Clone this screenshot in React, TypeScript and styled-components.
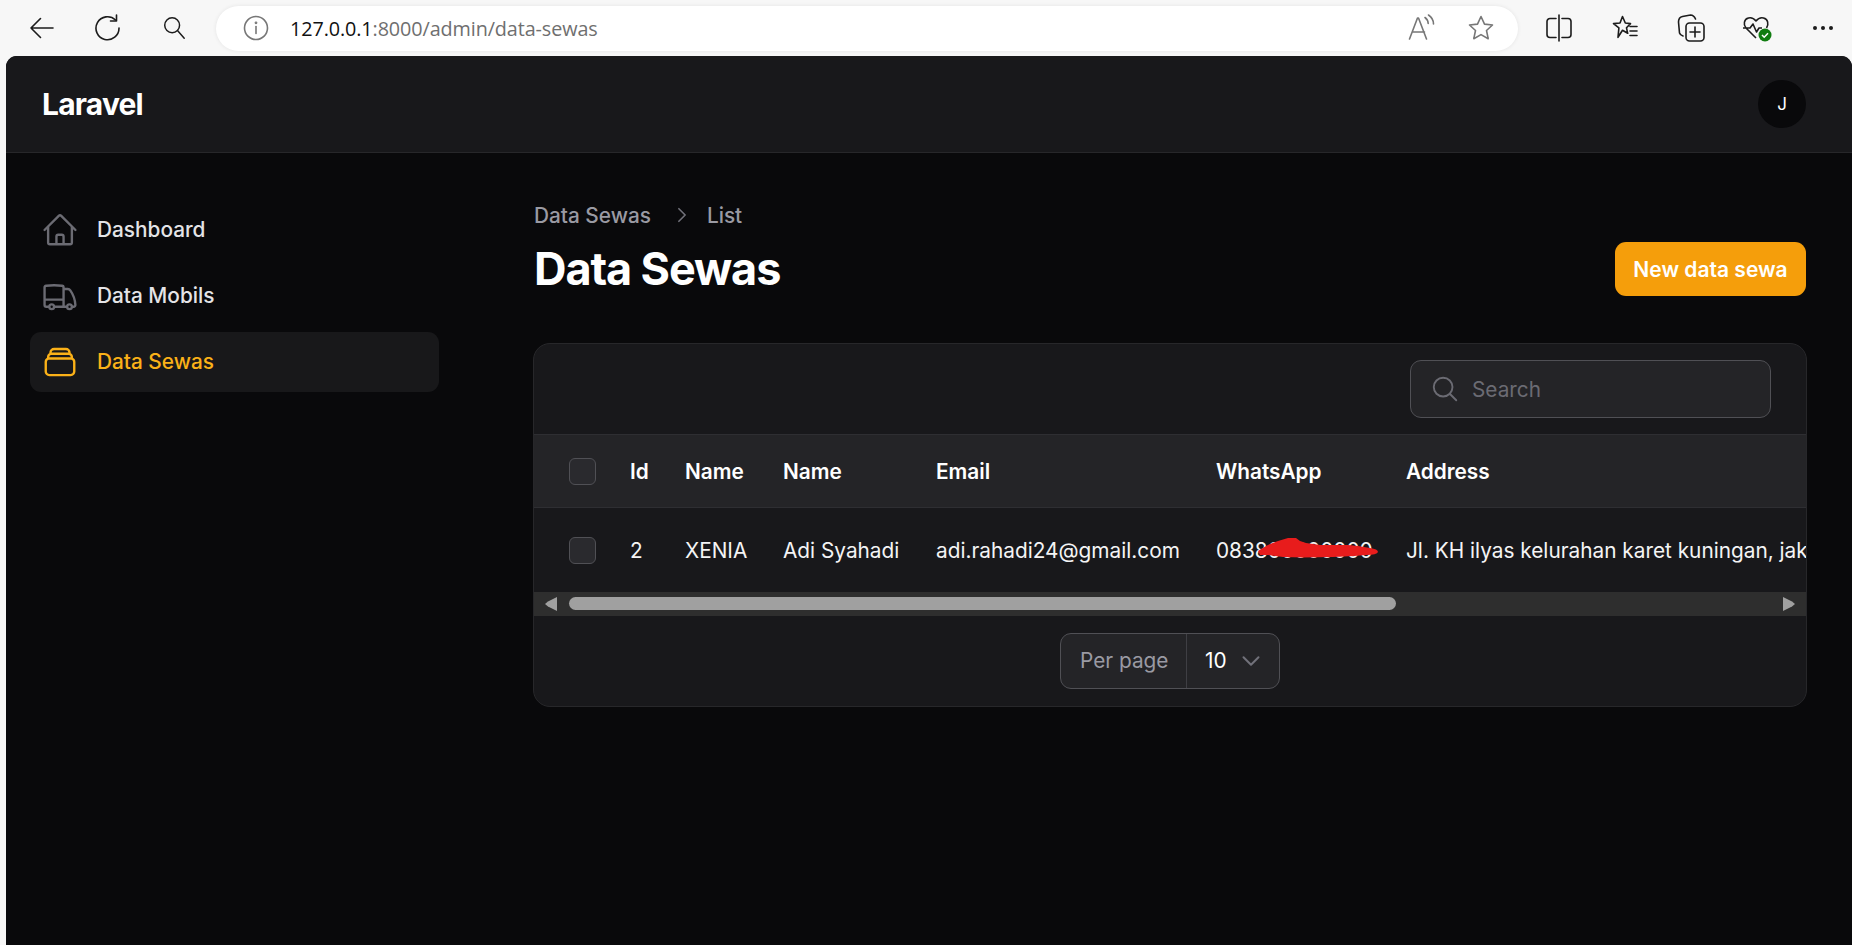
import React from "react"
import styled, { createGlobalStyle } from "styled-components"
import {
    HiOutlineChevronDown,
    HiOutlineChevronRight,
    HiOutlineHome,
    HiOutlineMagnifyingGlass,
    HiOutlineRectangleStack,
    HiOutlineTruck,
} from "react-icons/hi2"

const GlobalStyle = createGlobalStyle`
    html, body {
        margin: 0;
        height: 100%;
        background: #f7f7f7;
        overflow: hidden;
    }

    * {
        box-sizing: border-box;
    }
`

const Page = styled.div`
    width: 1852px;
    height: 945px;
    display: flex;
    flex-direction: column;
    overflow: hidden;
    font-family: Inter, "Liberation Sans", sans-serif;
`

/* browser chrome */
const BrowserBar = styled.div`
    flex: 0 0 56px;
    display: flex;
    align-items: center;
    padding: 0 0 0 9px;
    background: #f7f7f7;
    color: #1c1c1c;
`

const BarButton = styled.span`
    flex: 0 0 66px;
    display: flex;
    align-items: center;
    justify-content: center;
`

const AddressBar = styled.div`
    flex: 0 0 1302px;
    height: 45px;
    margin: 0 8px 0 9px;
    padding: 0 23px 0 26px;
    display: flex;
    align-items: center;
    background: #fff;
    border-radius: 23px;
    box-shadow: 0 0 4px rgba(0, 0, 0, 0.08);
`

const Url = styled.div`
    margin-left: 20px;
    flex: 1;
    font-family: "Open Sans", sans-serif;
    font-size: 19.8px;
    letter-spacing: -0.1px;
    color: #6f6f6f;

    b {
        font-weight: 400;
        color: #111;
    }
`

const AddressActions = styled.div`
    display: flex;
    align-items: center;
    gap: 31px;
    color: #777;
`

/* app shell */
const AppWindow = styled.div`
    flex: 1;
    margin-left: 6px;
    display: flex;
    flex-direction: column;
    background: #09090b;
    border-radius: 11px 11px 0 0;
    overflow: hidden;
`

const TopBar = styled.header`
    flex: 0 0 97px;
    display: flex;
    align-items: center;
    justify-content: space-between;
    padding: 0 46px 0 36px;
    background: #18181b;
    border-bottom: 1px solid #27272a;
`

const Logo = styled.div`
    font-size: 30px;
    font-weight: 700;
    letter-spacing: -0.8px;
    color: #fff;
`

const Avatar = styled.div`
    width: 48px;
    height: 48px;
    display: flex;
    align-items: center;
    justify-content: center;
    border-radius: 50%;
    background: #09090b;
    color: #fff;
    font-size: 17px;
`

const Body = styled.div`
    flex: 1;
    display: flex;
`

const Sidebar = styled.nav`
    flex: 0 0 527px;
    padding: 47px 94px 0 24px;
    display: flex;
    flex-direction: column;
    gap: 6px;
`

const NavItem = styled.a<{ $active?: boolean }>`
    height: 60px;
    display: flex;
    align-items: center;
    gap: 18px;
    padding-left: 11px;
    border-radius: 11px;
    font-size: 20.8px;
    font-weight: 500;
    color: ${(p) => (p.$active ? "#fbb118" : "#e4e4e7")};
    background: ${(p) => (p.$active ? "#18181a" : "transparent")};

    svg {
        width: 38px;
        height: 38px;
        color: ${(p) => (p.$active ? "#fbb118" : "#6b6b73")};
    }
`

const NavLabel = styled.span`
    margin-bottom: 2px;
`

const Main = styled.main`
    flex: 0 0 1274px;
    padding-top: 48px;
`

const Breadcrumb = styled.div`
    height: 28px;
    padding-left: 1px;
    display: flex;
    align-items: center;
    gap: 15px;
    font-size: 20.8px;
    font-weight: 500;
    color: #9a9aa3;

    svg {
        width: 20px;
        height: 20px;
        margin-left: 6px;
        color: #71717a;
        stroke-width: 2;
    }
`

const PageHead = styled.div`
    margin: 13px 0 47px;
    padding: 0 1px;
    height: 54px;
    display: flex;
    align-items: center;
    justify-content: space-between;
`

const Title = styled.h1`
    margin: 0;
    font-size: 45px;
    line-height: 52px;
    font-weight: 700;
    letter-spacing: -1.1px;
    color: #fff;
`

const PrimaryButton = styled.button`
    width: 191px;
    height: 54px;
    border: 0;
    border-radius: 11px;
    background: #f59e0b;
    color: #fff;
    font-family: inherit;
    font-size: 21px;
    font-weight: 600;
`

const Card = styled.section`
    height: 364px;
    background: #18181b;
    border: 1px solid #27272a;
    border-radius: 17px;
    overflow: hidden;
`

const Toolbar = styled.div`
    height: 90px;
    padding: 16px 35px 0 0;
    display: flex;
    justify-content: flex-end;
`

const SearchBox = styled.label`
    width: 361px;
    height: 58px;
    padding-left: 19px;
    display: flex;
    align-items: center;
    gap: 10px;
    background: #242427;
    border: 1.5px solid #505055;
    border-radius: 11px;

    svg {
        width: 30px;
        height: 30px;
        color: #6b6b73;
    }
`

const SearchInput = styled.input`
    flex: 1;
    min-width: 0;
    border: 0;
    outline: 0;
    background: transparent;
    font-family: inherit;
    font-size: 20.8px;
    color: #fff;

    &::placeholder {
        color: #6b6b73;
        opacity: 1;
    }
`

const Table = styled.table`
    width: 1272px;
    table-layout: fixed;
    border-collapse: collapse;
    font-size: 20.8px;
`

const HeadRow = styled.tr`
    height: 73px;
    background: #242427;
    border-top: 1px solid #2e2e32;
    border-bottom: 1px solid #2e2e32;
`

const HeadCell = styled.th`
    padding: 0;
    text-align: left;
    font-weight: 600;
    color: #fff;
`

const BodyRow = styled.tr`
    height: 84px;
`

const Cell = styled.td`
    position: relative;
    padding: 1px 0 0;
    white-space: nowrap;
    overflow: hidden;
    color: #f4f4f5;
`

const CheckCell = styled.div`
    padding-left: 35px;
    display: flex;
`

const Checkbox = styled.span`
    width: 27px;
    height: 27px;
    background: #2a2a2e;
    border: 1.5px solid #505055;
    border-radius: 6px;
`

const Scribble = styled.svg`
    position: absolute;
    left: 42px;
    top: 30px;
    width: 120px;
    height: 21px;
`

const ScrollTrack = styled.div`
    height: 24px;
    padding: 0 11px;
    display: flex;
    align-items: center;
    background: #2e2e2e;
    color: #a0a0a0;
`

const ScrollThumb = styled.div<{ $width: number }>`
    width: ${(p) => p.$width}px;
    height: 13px;
    margin: 0 auto 0 12px;
    border-radius: 7px;
    background: #a0a0a0;
`

const Pagination = styled.div`
    padding-top: 17px;
    display: flex;
    justify-content: center;
`

const PerPage = styled.div`
    width: 220px;
    height: 56px;
    display: flex;
    align-items: center;
    background: #242427;
    border: 1.5px solid #505055;
    border-radius: 11px;
    font-size: 20.8px;
`

const PerPageLabel = styled.span`
    flex: 0 0 126px;
    height: 100%;
    display: flex;
    align-items: center;
    padding-left: 19px;
    border-right: 1px solid #3f3f44;
    color: #9a9aa3;
`

const PerPageValue = styled.span`
    flex: 1;
    display: flex;
    align-items: center;
    padding-left: 18px;
    gap: 12px;
    color: #fff;

    svg {
        width: 24px;
        height: 24px;
        color: #71717a;
        stroke-width: 2;
    }
`

const Icon: React.FC<{ size?: number; children: React.ReactNode }> = ({
    size = 28,
    children,
}) => (
    <svg
        width={size}
        height={size}
        viewBox="0 0 28 28"
        fill="none"
        stroke="currentColor"
        strokeWidth="1.6"
        strokeLinecap="round"
        strokeLinejoin="round"
    >
        {children}
    </svg>
)

const columns = [96, 55, 98, 153, 280, 190, 400]

export default function App() {
    return (
        <Page>
            <GlobalStyle />
            <BrowserBar>
                <BarButton>
                    <Icon>
                        <path d="M25 14H3M12.5 4.5 3 14l9.5 9.5" />
                    </Icon>
                </BarButton>
                <BarButton>
                    <Icon>
                        <path d="M25 14A11.5 11.5 0 1 1 21.5 6" />
                        <path d="M22.500 1v6h-6" />
                    </Icon>
                </BarButton>
                <BarButton>
                    <Icon size={26}>
                        <circle cx="12" cy="11" r="8" />
                        <path d="m18 17 7 8" />
                    </Icon>
                </BarButton>
                <AddressBar>
                    <Icon>
                        <circle cx="14" cy="14" r="11.5" stroke="#777" />
                        <path d="M14 12.5v7" stroke="#777" />
                        <circle cx="14" cy="8.8" r=".6" stroke="#777" />
                    </Icon>
                    <Url>
                        <b>127.0.0.1</b>:8000/admin/data-sewas
                    </Url>
                    <AddressActions>
                        <Icon>
                            <path d="m1.5 25 8-21h1l8 21M4.5 18h12" />
                            <path d="M17 3.5c2 1.5 3 3.5 3.2 6M20.5 1c3 2 5 5 5 9" />
                        </Icon>
                        <Icon>
                            <path d="m14 2.5 3.5 7.6 8 .9-6 5.5 1.7 8.2L14 20.6l-7.2 4.1 1.7-8.2-6-5.5 8-.9z" />
                        </Icon>
                    </AddressActions>
                </AddressBar>
                <BarButton>
                    <Icon>
                        <path d="M11 4.500H5a3 3 0 0 0-3 3v13a3 3 0 0 0 3 3h6M17 4.500h6a3 3 0 0 1 3 3v13a3 3 0 0 1-3 3h-6M14 1v26" />
                    </Icon>
                </BarButton>
                <BarButton>
                    <Icon>
                        <path d="m11.500 2.500 2.800 6.500 5.200.6-4 4.200 1.200 5.500-5.200-3-4.500 7 .900-9.500-5.400-4.200 6.500-.6z" />
                        <path d="M19 12.500h7M19 17h7M19 21.500h7" />
                    </Icon>
                </BarButton>
                <BarButton>
                    <Icon>
                        <rect x="9" y="9" width="18" height="18" rx="3.500" />
                        <path d="M18 13v10M13 18h10" />
                        <path d="M6 22c-2-.5-3-1.500-3.500-3L1.500 8c0-3 1.500-5 4-5.500l8-1.500c2.500 0 4 1.500 5 4" />
                    </Icon>
                </BarButton>
                <BarButton>
                    <svg width="30" height="28" viewBox="0 0 30 28" fill="none">
                        <path
                            d="M14 24 4 14C1 10.500 2 5 6.500 4c3-.7 5.500.5 7.500 3 2-2.500 4.500-3.700 7.500-3 4.500 1 5.500 6 3 10M1 14h7l3-4 3.500 8 2.500-4h3"
                            stroke="#1c1c1c"
                            strokeWidth="1.600"
                            strokeLinejoin="round"
                        />
                        <circle cx="23" cy="21" r="6.500" fill="#107c10" />
                        <path
                            d="m20 21 2.200 2.200 3.800-4"
                            stroke="#fff"
                            strokeWidth="1.500"
                        />
                    </svg>
                </BarButton>
                <BarButton>
                    <svg width="22" height="6" viewBox="0 0 22 6">
                        <circle cx="3" cy="3" r="2" fill="#1c1c1c" />
                        <circle cx="11" cy="3" r="2" fill="#1c1c1c" />
                        <circle cx="19" cy="3" r="2" fill="#1c1c1c" />
                    </svg>
                </BarButton>
            </BrowserBar>
            <AppWindow>
                <TopBar>
                    <Logo>Laravel</Logo>
                    <Avatar>J</Avatar>
                </TopBar>
                <Body>
                    <Sidebar>
                        <NavItem>
                            <HiOutlineHome />
                            <NavLabel>Dashboard</NavLabel>
                        </NavItem>
                        <NavItem>
                            <HiOutlineTruck />
                            <NavLabel>Data Mobils</NavLabel>
                        </NavItem>
                        <NavItem $active>
                            <HiOutlineRectangleStack />
                            <NavLabel>Data Sewas</NavLabel>
                        </NavItem>
                    </Sidebar>
                    <Main>
                        <Breadcrumb>
                            Data Sewas
                            <HiOutlineChevronRight />
                            List
                        </Breadcrumb>
                        <PageHead>
                            <Title>Data Sewas</Title>
                            <PrimaryButton>New data sewa</PrimaryButton>
                        </PageHead>
                        <Card>
                            <Toolbar>
                                <SearchBox>
                                    <HiOutlineMagnifyingGlass />
                                    <SearchInput placeholder="Search" />
                                </SearchBox>
                            </Toolbar>
                            <Table>
                                <colgroup>
                                    {columns.map((width, i) => (
                                        <col key={i} width={width} />
                                    ))}
                                </colgroup>
                                <thead>
                                    <HeadRow>
                                        <HeadCell>
                                            <CheckCell>
                                                <Checkbox />
                                            </CheckCell>
                                        </HeadCell>
                                        <HeadCell>Id</HeadCell>
                                        <HeadCell>Name</HeadCell>
                                        <HeadCell>Name</HeadCell>
                                        <HeadCell>Email</HeadCell>
                                        <HeadCell>WhatsApp</HeadCell>
                                        <HeadCell>Address</HeadCell>
                                    </HeadRow>
                                </thead>
                                <tbody>
                                    <BodyRow>
                                        <Cell>
                                            <CheckCell>
                                                <Checkbox />
                                            </CheckCell>
                                        </Cell>
                                        <Cell>2</Cell>
                                        <Cell>XENIA</Cell>
                                        <Cell>Adi Syahadi</Cell>
                                        <Cell>adi.rahadi24@gmail.com</Cell>
                                        <Cell>
                                            083800000000
                                            <Scribble viewBox="0 0 120 21">
                                                <path
                                                    d="M0 13 C4 10 8 8 12 6 L20 3 L30 0 L38 0 L42 3 L48 5 L62 7 L90 7 L100 8 L112 10 Q120 11 120 14 Q119 17 108 17 L96 18 L75 19 L45 19.500 L25 19 L10 17 L2 17Z"
                                                    fill="#e81c1c"
                                                />
                                            </Scribble>
                                        </Cell>
                                        <Cell>
                                            Jl. KH ilyas kelurahan karet kuningan, jakarta
                                        </Cell>
                                    </BodyRow>
                                </tbody>
                            </Table>
                            <ScrollTrack>
                                <svg width="12" height="14" viewBox="0 0 12 14">
                                    <path d="M12 0v14L3 9.500 0 7l3-2.500z" fill="currentColor" />
                                </svg>
                                <ScrollThumb $width={827} />
                                <svg width="12" height="14" viewBox="0 0 12 14">
                                    <path d="M0 0v14l9-4.500L12 7 9 4.500z" fill="currentColor" />
                                </svg>
                            </ScrollTrack>
                            <Pagination>
                                <PerPage>
                                    <PerPageLabel>Per page</PerPageLabel>
                                    <PerPageValue>
                                        10
                                        <HiOutlineChevronDown />
                                    </PerPageValue>
                                </PerPage>
                            </Pagination>
                        </Card>
                    </Main>
                </Body>
            </AppWindow>
        </Page>
    )
}
